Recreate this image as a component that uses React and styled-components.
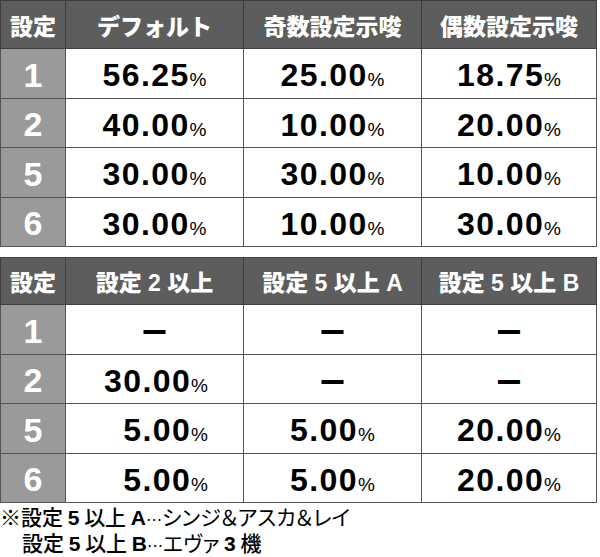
import React from 'react';
import styled, { createGlobalStyle } from 'styled-components';

const GlobalStyle = createGlobalStyle`
    html, body {
        margin: 0;
        padding: 0;
        background: #ffffff;
    }
`;

const Page = styled.div`
    width: 596px;
    font-family: "Liberation Sans", "Noto Sans CJK JP", sans-serif;
    color: #000000;
`;

const Table = styled.table`
    width: 596px;
    table-layout: fixed;
    border-collapse: collapse;
    margin-bottom: ${({ $gap }) => $gap || 0}px;

    thead tr {
        height: ${({ $headH }) => $headH}px;
    }

    tbody tr {
        height: ${({ $rowH }) => $rowH}px;
    }
`;

const HeadCell = styled.th`
    padding: 0;
    background: #5d5d5d;
    border: 1px solid #3e3e3e;
    color: #ffffff;
    font-family: "Liberation Sans", "Noto Sans CJK JP", sans-serif;
    font-weight: 900;
    font-size: 23px;
    text-align: center;
    vertical-align: middle;
    white-space: nowrap;
`;

const SettingCell = styled.th`
    padding: 4px 0 0;
    background: #9a9a9a;
    border: 1px solid #555555;
    color: #ffffff;
    font-weight: 700;
    font-size: 34px;
    text-align: center;
    vertical-align: middle;
`;

const ValueCell = styled.td`
    padding: 5px ${({ $align }) => ($align === 'right' ? '35px' : '0')} 0 0;
    background: #ffffff;
    border: 1px solid #555555;
    text-align: ${({ $align }) => $align || 'center'};
    vertical-align: middle;
    white-space: nowrap;
`;

const Num = styled.span`
    font-weight: 700;
    font-size: 32px;
    letter-spacing: 1.4px;
`;

const Pct = styled.span`
    font-weight: 400;
    font-size: 19px;
`;

const Dash = styled.span`
    font-family: "Noto Sans CJK JP", sans-serif;
    font-weight: 700;
    font-size: 27px;
`;

const Note = styled.div`
    padding-top: 2px;
    font-family: "Noto Sans CJK JP", sans-serif;
    font-size: 21px;
    line-height: 23px;
    font-weight: 400;
    white-space: nowrap;
`;

const NoteLine = styled.div`
    padding-left: ${({ $indent }) => ($indent ? '22px' : '0')};
    font-feature-settings: "palt";
`;

const Mid = styled.span`
    font-weight: 500;
`;

const Latin = styled.span`
    font-family: "Liberation Sans", sans-serif;
    font-weight: 700;
`;

const Dots = styled.span`
    font-family: "DejaVu Sans", sans-serif;
    font-size: 16px;
`;

const Cols = () => (
    <colgroup>
        <col style={{ width: 65 }} />
        <col style={{ width: 178 }} />
        <col style={{ width: 178 }} />
        <col style={{ width: 175 }} />
    </colgroup>
);

const table1 = {
    heads: ['設定', 'デフォルト', '奇数設定示唆', '偶数設定示唆'],
    rows: [
        ['1', '56.25', '25.00', '18.75'],
        ['2', '40.00', '10.00', '20.00'],
        ['5', '30.00', '30.00', '10.00'],
        ['6', '30.00', '10.00', '30.00'],
    ],
};

const table2 = {
    heads: ['設定', '設定 2 以上', '設定 5 以上 A', '設定 5 以上 B'],
    rows: [
        ['1', null, null, null],
        ['2', '30.00', null, null],
        ['5', '5.00', '5.00', '20.00'],
        ['6', '5.00', '5.00', '20.00'],
    ],
};

const RateTable = ({ data, headH, rowH, gap, alignFirst }) => (
    <Table $headH={headH} $rowH={rowH} $gap={gap}>
        <Cols />
        <thead>
            <tr>
                {data.heads.map((h, i) => (
                    <HeadCell key={i}>{h}</HeadCell>
                ))}
            </tr>
        </thead>
        <tbody>
            {data.rows.map(([setting, ...vals]) => (
                <tr key={setting}>
                    <SettingCell>{setting}</SettingCell>
                    {vals.map((v, i) =>
                        v === null ? (
                            <ValueCell key={i}>
                                <Dash>ー</Dash>
                            </ValueCell>
                        ) : (
                            <ValueCell key={i} $align={i === 0 && alignFirst ? 'right' : undefined}>
                                <Num>{v}</Num>
                                <Pct>%</Pct>
                            </ValueCell>
                        )
                    )}
                </tr>
            ))}
        </tbody>
    </Table>
);

export default function App() {
    return (
        <Page>
            <GlobalStyle />
            <RateTable data={table1} headH={48} rowH={49.5} gap={10} />
            <RateTable data={table2} headH={47} rowH={49.5} alignFirst />
            <Note>
                <NoteLine>
                    ※<Mid>設定</Mid> <Latin>5</Latin> <Mid>以上</Mid> <Latin>A</Latin><Dots>⋯</Dots>シンジ＆アスカ＆レイ
                </NoteLine>
                <NoteLine $indent>
                    <Mid>設定</Mid> <Latin>5</Latin> <Mid>以上</Mid> <Latin>B</Latin><Dots>⋯</Dots>エヴァ <Latin>3</Latin> <Mid>機</Mid>
                </NoteLine>
            </Note>
        </Page>
    );
}
